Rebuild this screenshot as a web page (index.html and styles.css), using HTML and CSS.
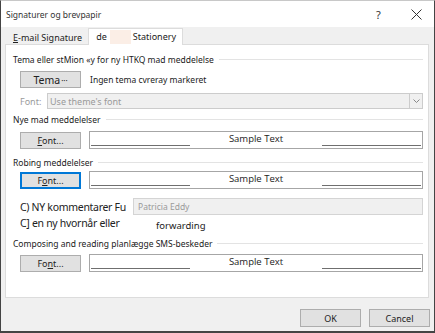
FILE: index.html
```html
<!DOCTYPE html>
<html lang="da">
<head>
    <meta charset="UTF-8">
    <title>Signaturer og brevpapir</title>
    <link rel="stylesheet" href="styles.css">
</head>
<body>
    <div class="window">
        <div class="titlebar">
            <span class="title">Signaturer og brevpapir</span>
            <span class="help">?</span>
            <span class="close">
                <svg width="11" height="11" viewBox="0 0 11 11"><path d="M0.5 0.5 L10.5 10.5 M10.5 0.5 L0.5 10.5" stroke="#333" stroke-width="1" fill="none"/></svg>
            </span>
        </div>

        <div class="tabs">
            <div class="tab"><u>E</u>-mail Signature</div>
            <div class="tab active">de <span class="blank"></span> Stationery</div>
        </div>

        <div class="panel">
            <div class="group-head"><span>Tema eller stMion «y for ny HTKQ mad meddelelse</span><i></i></div>
            <div class="row theme-row">
                <button class="btn theme-btn">Tema<span class="dots">···</span></button>
                <span class="note">Ingen tema cvreray markeret</span>
            </div>
            <div class="row font-row">
                <span class="label">Font:</span>
                <div class="select">
                    <span>Use theme's font</span>
                    <span class="arrow">
                        <svg width="7" height="4" viewBox="0 0 7 4"><path d="M0.5 0.5 L3.5 3.5 L6.5 0.5" stroke="#888" fill="none"/></svg>
                    </span>
                </div>
            </div>

            <div class="group-head h2"><span>Nye mad meddelelser</span><i></i></div>
            <div class="row sample-row">
                <button class="btn"><u>F</u>ont...</button>
                <div class="sample"><i></i><span>Sample Text</span><i></i></div>
            </div>

            <div class="group-head h3"><span>Robing meddelelser</span><i></i></div>
            <div class="row sample-row r3">
                <button class="btn focus">F<u>o</u>nt...</button>
                <div class="sample"><i></i><span>Sample Text</span><i></i></div>
            </div>

            <div class="row option-row">
                <span class="option">C) NY kommentarer Fu</span>
                <div class="input">Patricia Eddy</div>
            </div>
            <div class="row option-row2">
                <span class="option">C] en ny hvornår eller</span>
                <span class="fwd">forwarding</span>
            </div>

            <div class="group-head h4"><span>Composing and reading planlægge SMS-beskeder</span><i></i></div>
            <div class="row sample-row r4">
                <button class="btn">Fo<u>n</u>t...</button>
                <div class="sample"><i></i><span>Sample Text</span><i></i></div>
            </div>
        </div>

        <div class="footer">
            <button class="btn dlg">OK</button>
            <button class="btn dlg">Cancel</button>
        </div>
    </div>
</body>
</html>
```

FILE: styles.css
```css
* {
    margin: 0;
    padding: 0;
    box-sizing: border-box;
}
body {
    font-family: 'Noto Sans', 'Open Sans', sans-serif;
    font-size: 9px;
    color: #1a1a1a;
    background: #fff;
}
.window {
    width: 435px;
    height: 333px;
    background: #f0f0f0;
    border: 1px solid #444;
    border-top-color: #c8c8c8;
    border-bottom-width: 2px;
    display: flex;
    flex-direction: column;
}
.titlebar {
    height: 26px;
    background: #fff;
    display: flex;
    align-items: center;
    padding-left: 5px;
}
.title {
    flex: 1;
    font-size: 8.5px;
    color: #333;
}
.help {
    font-size: 11px;
    color: #333;
    width: 14px;
    margin-right: 21px;
}
.close {
    width: 11px;
    height: 11px;
    margin-right: 12px;
    display: flex;
}
.tabs {
    display: flex;
    align-items: flex-end;
    height: 17px;
    margin: 1px 0 0 7px;
    position: relative;
    z-index: 1;
}
.tab {
    height: 15px;
    padding: 0 6px 0 5px;
    font-size: 9px;
    line-height: 15px;
    color: #222;
}
.tab.active {
    height: 17px;
    line-height: 16px;
    background: #fff;
    border: 1px solid #dcdcdc;
    border-bottom: none;
    padding: 0 6px 0 7px;
    display: flex;
    align-items: center;
}
.blank {
    display: inline-block;
    width: 21px;
    height: 14px;
    background: #fbeee6;
    margin: 0 2px 0 3px;
}
.panel {
    height: 254px;
    margin: -1px 5px 0 4px;
    background: #fff;
    border: 1px solid #dcdcdc;
    padding: 0 5px 0 7px;
}
.group-head {
    display: flex;
    align-items: center;
    height: 12px;
    margin-top: 8px;
    font-size: 8.5px;
}
.group-head i {
    flex: 1;
    border-top: 1px solid #e3e3e3;
    margin-left: 5px;
}
.group-head.h2 { margin-top: 4px; }
.group-head.h3 { margin-top: 7px; }
.group-head.h4 { margin-top: 6px; }
.row {
    display: flex;
    align-items: center;
    margin-left: 7px;
}
.btn {
    font-family: inherit;
    font-size: 9px;
    color: #222;
    background: #e1e1e1;
    border: 1px solid #adadad;
    width: 61px;
    height: 17px;
    flex: none;
}
.btn.focus {
    border: 2px solid #0078d7;
}
.theme-row {
    margin-top: 6px;
    height: 17px;
}
.theme-btn {
    font-size: 10.5px;
}
.dots {
    font-size: 8px;
    margin-left: 1px;
}
.note {
    margin-left: 9px;
    font-size: 8.5px;
}
.font-row {
    margin-top: 5px;
    height: 16px;
}
.label {
    width: 27px;
    color: #9a9a9a;
}
.select {
    flex: 1;
    height: 16px;
    background: #f0f0f0;
    border: 1px solid #cccccc;
    display: flex;
    align-items: center;
    justify-content: space-between;
    padding-left: 2px;
    color: #9a9a9a;
}
.arrow {
    width: 13px;
    height: 14px;
    border-left: 1px solid #cccccc;
    display: flex;
    align-items: center;
    justify-content: center;
}
.sample-row {
    margin-top: 6px;
    height: 18px;
}
.sample-row.r3 { margin-top: 3px; }
.sample-row.r4 { margin-top: 5px; }
.sample {
    flex: 1;
    height: 18px;
    margin-left: 8px;
    border: 1px solid #a6a6a6;
    display: grid;
    grid-template-columns: 1fr 132px 1fr;
    align-items: end;
    padding: 0 1px 3px 1px;
}
.sample i {
    border-top: 1px solid #6f6f6f;
}
.sample span {
    font-family: 'Open Sans', sans-serif;
    font-size: 9.5px;
    line-height: 14px;
    text-align: center;
    color: #222;
    align-self: center;
}
.option-row {
    margin-top: 9px;
    height: 17px;
}
.option {
    font-size: 10.5px;
    letter-spacing: -0.3px;
    width: 113px;
    flex: none;
    white-space: nowrap;
    color: #222;
}
.input {
    flex: 1;
    height: 17px;
    background: #f0f0f0;
    border: 1px solid #d4d4d4;
    color: #9a9a9a;
    padding-left: 4px;
    line-height: 15px;
    font-size: 8.5px;
}
.option-row2 {
    height: 16px;
}
.fwd {
    margin: 4px 0 0 23px;
    font-size: 9.5px;
}
.footer {
    flex: 1;
    display: flex;
    justify-content: flex-end;
    align-items: flex-start;
    gap: 8px;
    padding: 11px 4px 0 0;
}
.btn.dlg {
    width: 61px;
    height: 18px;
}
```
